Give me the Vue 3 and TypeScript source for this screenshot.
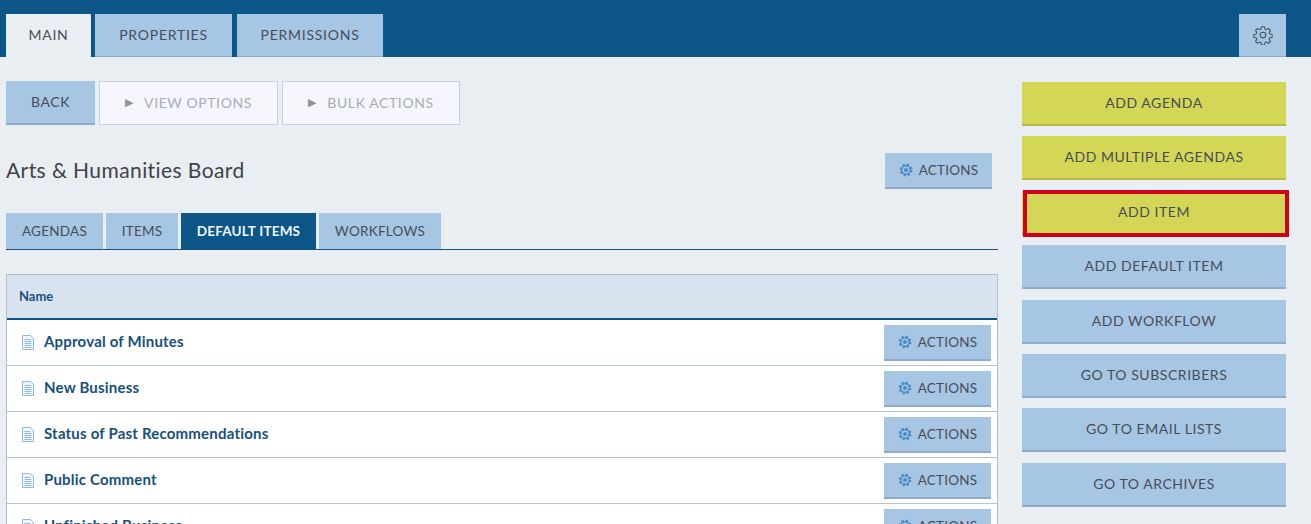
<script setup lang="ts">
const mainTabs: string[] = ['MAIN', 'PROPERTIES', 'PERMISSIONS']
const subTabs: string[] = ['AGENDAS', 'ITEMS', 'DEFAULT ITEMS', 'WORKFLOWS']
const rows: string[] = ['Approval of Minutes', 'New Business', 'Status of Past Recommendations', 'Public Comment', 'Unfinished Business']
const sideButtons = [
  { label: 'ADD AGENDA', lime: true, marked: false },
  { label: 'ADD MULTIPLE AGENDAS', lime: true, marked: false },
  { label: 'ADD ITEM', lime: true, marked: true },
  { label: 'ADD DEFAULT ITEM', lime: false, marked: false },
  { label: 'ADD WORKFLOW', lime: false, marked: false },
  { label: 'GO TO SUBSCRIBERS', lime: false, marked: false },
  { label: 'GO TO EMAIL LISTS', lime: false, marked: false },
  { label: 'GO TO ARCHIVES', lime: false, marked: false },
]
</script>

<template>
  <div class="page">
    <header class="topbar">
      <nav class="main-tabs">
        <div v-for="(t, i) in mainTabs" :key="t" class="main-tab" :class="{ active: i === 0 }">{{ t }}</div>
      </nav>
      <div class="gear-btn">
        <svg width="20" height="20" viewBox="0 0 24 24" fill="none" stroke="#4a5560" stroke-width="1.3" stroke-linejoin="round">
          <circle cx="12" cy="12" r="3.4" />
          <path d="M10.2 2h3.6l.5 2.8 1.9.8 2.3-1.6 2.5 2.5-1.6 2.3.8 1.9 2.8.5v3.6l-2.8.5-.8 1.9 1.6 2.3-2.5 2.5-2.3-1.6-1.9.8-.5 2.8h-3.6l-.5-2.8-1.9-.8-2.3 1.6-2.5-2.5 1.6-2.3-.8-1.9-2.8-.5v-3.6l2.8-.5.8-1.9-1.6-2.3 2.5-2.5 2.3 1.6 1.9-.8z" />
        </svg>
      </div>
    </header>

    <div class="content">
      <main class="left">
        <div class="toolbar">
          <div class="btn back">BACK</div>
          <div class="btn ghost view"><span class="tri">▶</span>VIEW OPTIONS</div>
          <div class="btn ghost bulk"><span class="tri">▶</span>BULK ACTIONS</div>
        </div>

        <div class="title-row">
          <h1>Arts &amp; Humanities Board</h1>
          <div class="actions title-actions">
            <svg class="cog" width="14" height="14" viewBox="0 0 24 24">
              <circle cx="12" cy="12" r="8.5" fill="none" stroke="#4a8ac4" stroke-width="5" stroke-dasharray="3.6 3.07" />
              <circle cx="12" cy="12" r="7.5" fill="none" stroke="#4a8ac4" stroke-width="2" />
              <circle cx="12" cy="12" r="3.5" fill="#4a8ac4" />
            </svg>
            ACTIONS
          </div>
        </div>

        <nav class="sub-tabs">
          <div v-for="(t, i) in subTabs" :key="t" class="sub-tab" :class="['s' + i, { active: i === 2 }]">{{ t }}</div>
        </nav>

        <section class="table">
          <div class="thead">Name</div>
          <div v-for="r in rows" :key="r" class="row">
            <svg class="doc" width="12" height="15" viewBox="0 0 12 15" fill="none" stroke="#8db8ea" stroke-width="1">
              <path d="M.5.5h8l3 3v11H.5z" fill="#f3f7fd" />
              <path d="M2.5 4.5h6M2.5 6.5h7M2.5 8.5h7M2.5 10.5h7M2.5 12.5h7" />
            </svg>
            <span class="name">{{ r }}</span>
            <div class="actions">
              <svg class="cog" width="14" height="14" viewBox="0 0 24 24">
                <circle cx="12" cy="12" r="8.5" fill="none" stroke="#4a8ac4" stroke-width="5" stroke-dasharray="3.6 3.07" />
                <circle cx="12" cy="12" r="7.5" fill="none" stroke="#4a8ac4" stroke-width="2" />
                <circle cx="12" cy="12" r="3.5" fill="#4a8ac4" />
              </svg>
              ACTIONS
            </div>
          </div>
        </section>
      </main>

      <aside class="side">
        <div v-for="b in sideButtons" :key="b.label" class="side-btn" :class="{ lime: b.lime }">
          {{ b.label }}
          <span v-if="b.marked" class="mark"></span>
        </div>
      </aside>
    </div>
  </div>
</template>

<style>
html, body { margin: 0; height: 524px; overflow: hidden; background: #e9eef3; }
</style>

<style scoped>
.page {
  height: 524px;
  overflow: hidden;
  background: #e9eef3;
  font-family: "Lato", "Noto Sans", sans-serif;
  color: #474d57;
  font-size: 14px;
}
.topbar {
  height: 57px;
  box-sizing: border-box;
  background: #0b5587;
  padding: 14px 25px 0 6px;
  display: flex;
  justify-content: space-between;
}
.main-tabs { display: flex; }
.main-tab {
  height: 43px;
  box-sizing: border-box;
  background: #a7c6e4;
  border-bottom: 1px solid #8fabc9;
  padding-bottom: 2px;
  display: flex;
  align-items: center;
  justify-content: center;
  letter-spacing: 0.75px;
  width: 137px;
  margin-right: 5px;
}
.main-tab:nth-child(1) { width: 85px; margin-right: 4px; background: #e9eef3; border-bottom: 0; }
.main-tab:nth-child(3) { width: 146px; margin-right: 0; }
.gear-btn {
  width: 47px;
  height: 43px;
  box-sizing: border-box;
  background: #a7c6e4;
  border-bottom: 1px solid #8fabc9;
  display: flex;
  align-items: center;
  justify-content: center;
}
.content {
  display: flex;
  padding: 0 25px 0 6px;
  gap: 24px;
}
.left { width: 992px; flex: none; padding-top: 24px; }
.toolbar { display: flex; gap: 4px; height: 44px; }
.btn {
  box-sizing: border-box;
  height: 44px;
  padding-bottom: 2px;
  display: flex;
  align-items: center;
  justify-content: center;
  letter-spacing: 0.6px;
}
.back { width: 89px; background: #a7c6e4; border-bottom: 2px solid #8fabc9; }
.ghost {
  background: #f4f6fb;
  border: 1px solid #c7d1dc;
  color: #a9adb3;
}
.view { width: 179px; }
.bulk { width: 178px; }
.tri { font-size: 11px; color: #8f9499; margin-right: 11px; letter-spacing: 0; }
.title-row {
  display: flex;
  justify-content: space-between;
  align-items: center;
  height: 36px;
  margin-top: 28px;
  padding-right: 6px;
}
h1 {
  margin: 0 0 4px;
  font-size: 21px;
  font-weight: 400;
  color: #3e4347;
  letter-spacing: 0.42px;
}
.actions {
  width: 107px;
  height: 36px;
  box-sizing: border-box;
  background: #a7c6e4;
  border-bottom: 2px solid #8fabc9;
  display: flex;
  align-items: center;
  justify-content: center;
  gap: 6px;
  font-size: 13.5px;
  letter-spacing: 0.2px;
  flex: none;
}
.sub-tabs {
  display: flex;
  height: 36px;
  margin-top: 24px;
  border-bottom: 1px solid #0b5587;
  gap: 3px;
}
.sub-tab {
  background: #a7c6e4;
  display: flex;
  align-items: center;
  justify-content: center;
  height: 36px;
  font-size: 13.5px;
  letter-spacing: 0.25px;
}
.s0 { width: 97px; }
.s1 { width: 72px; }
.s2 { width: 135px; }
.s3 { width: 122px; }
.sub-tab.active { background: #0b5587; color: #eef4f9; font-weight: 700; letter-spacing: 0.2px; }
.table {
  margin-top: 24px;
  border: 1px solid #aebfd4;
  border-bottom: 0;
  background: #fff;
}
.thead {
  box-sizing: border-box;
  background: #d9e3ef;
  border-bottom: 2px solid #0b5587;
  height: 45px;
  padding-bottom: 2px;
  display: flex;
  align-items: center;
  padding-left: 12px;
  font-size: 13px;
  font-weight: 700;
  color: #17507c;
}
.row {
  height: 46px;
  box-sizing: border-box;
  border-bottom: 1px solid #b4c2d3;
  display: flex;
  align-items: flex-start;
  padding: 5px 6px 0 15px;
}
.doc { margin-top: 10px; flex: none; }
.name {
  margin-left: 10px;
  margin-top: 7px;
  flex: 1;
  font-size: 15px;
  font-weight: 700;
  letter-spacing: 0.2px;
  color: #17507c;
}
.side {
  width: 264px;
  flex: none;
  padding-top: 25px;
  display: flex;
  flex-direction: column;
  gap: 10.4px;
}
.side-btn {
  position: relative;
  height: 44px;
  box-sizing: border-box;
  background: #a7c6e4;
  border-bottom: 2px solid #8fabc9;
  padding-bottom: 1px;
  display: flex;
  align-items: center;
  justify-content: center;
  letter-spacing: 0.55px;
}
.side-btn.lime { background: #d4d755; border-bottom-color: #b5b84c; }
.mark {
  position: absolute;
  left: 1px;
  top: -1px;
  width: 266px;
  height: 47px;
  box-sizing: border-box;
  border: 4px solid #d0021b;
}
</style>
